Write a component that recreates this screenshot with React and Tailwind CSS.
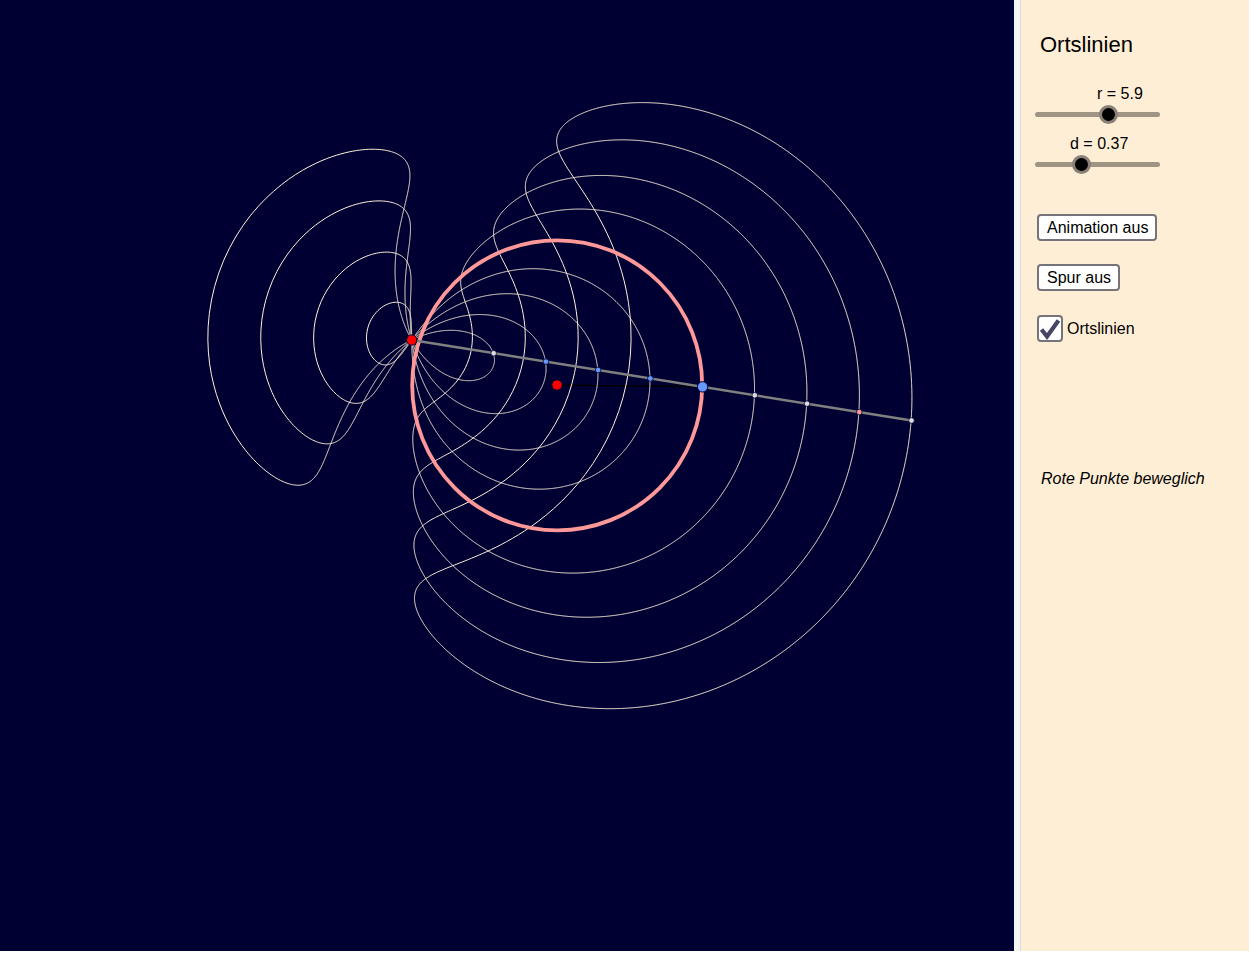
// Ortslinien: conchoids of a circle, sampled at load
const A = { x: 411.7, y: 340 };
const M = { x: 557.2, y: 385.3 };
const R = 145;
const STEP = 52.9;
const P_ANGLE = 0.0085;

function conchoid(k) {
  let d = '';
  for (let i = 0; i <= 1800; i++) {
    const t = (i / 1800) * Math.PI * 2;
    const px = M.x + R * Math.cos(t);
    const py = M.y + R * Math.sin(t);
    const len = Math.hypot(px - A.x, py - A.y);
    const x = px + (k * STEP * (px - A.x)) / len;
    const y = py + (k * STEP * (py - A.y)) / len;
    d += `${i === 0 ? 'M' : 'L'}${x.toFixed(2)} ${y.toFixed(2)}`;
  }
  return d + 'Z';
}

const steps = [-4, -3, -2, -1, 1, 2, 3, 4];
const pointColors = {
  '-4': '#dddddd',
  '-3': '#6699ff',
  '-2': '#6699ff',
  '-1': '#6699ff',
  1: '#dddddd',
  2: '#dddddd',
  3: '#ff9999',
  4: '#dddddd',
};

function Figure() {
  const px = M.x + R * Math.cos(P_ANGLE);
  const py = M.y + R * Math.sin(P_ANGLE);
  const ex = 911.5;
  const ey = 420.5;
  const len = Math.hypot(ex - A.x, ey - A.y);
  const ux = (ex - A.x) / len;
  const uy = (ey - A.y) / len;
  // point on the ray at the circle's right side
  const bx = ex - 4 * STEP * ux;
  const by = ey - 4 * STEP * uy;

  return (
    <svg width="1014" height="951" viewBox="0 0 1014 951" className="block">
      <line x1={M.x} y1={M.y} x2={px} y2={py} stroke="#000000" strokeWidth="1.5" />
      {steps.map((k) => (
        <path key={k} d={conchoid(k)} fill="none" stroke="#fff2da" strokeWidth="1" />
      ))}
      <circle cx={M.x} cy={M.y} r={R} fill="none" stroke="#ff9999" strokeWidth="3.8" />
      <line x1={A.x} y1={A.y} x2={ex} y2={ey} stroke="#808080" strokeWidth="2.4" />
      {steps.map((k) => (
        <circle
          key={k}
          cx={bx + k * STEP * ux}
          cy={by + k * STEP * uy}
          r="2.8"
          fill={pointColors[k]}
          stroke="#000033"
          strokeWidth="0.8"
        />
      ))}
      <circle cx={bx} cy={by} r="5.2" fill="#6699ff" stroke="#000033" strokeWidth="1" />
      <circle cx={A.x} cy={A.y} r="5.2" fill="#ff0000" stroke="#000033" strokeWidth="1" />
      <circle cx={557} cy={385} r="5.2" fill="#ff0000" stroke="#000033" strokeWidth="1" />
    </svg>
  );
}

function Slider({ label, labelClass, thumbClass }) {
  return (
    <div>
      <div className={`text-base leading-[18px] ${labelClass}`}>{label}</div>
      <div className="relative mt-[9px] h-[5px] w-[125px] rounded-full bg-[#a09585]">
        <div className={`absolute top-[-7px] h-[19px] w-[19px] rounded-full border-[3px] border-[#8a8078] bg-black ${thumbClass}`} />
      </div>
    </div>
  );
}

function GgbButton({ children }) {
  return (
    <button className="block h-[27px] rounded-[4px] border-2 border-[#77737a] bg-white pl-[8px] pr-[7px] text-base leading-[22px] text-black">
      {children}
    </button>
  );
}

export default function App() {
  return (
    <div className="flex h-[951px] w-[1249px] font-['Liberation_Sans',Arial,sans-serif] text-black">
      <div className="h-full w-[1014px] bg-[#000033]">
        <Figure />
      </div>
      <div className="h-full w-[7px] border-r border-[#dcdcdc] bg-[#f5f5f5]" />
      <div className="h-full w-[228px] bg-[#ffeed6] pl-[14px] pt-[32px]">
        <h1 className="pl-[5px] text-[22px] leading-[25px]">Ortslinien</h1>

        <div className="mt-[28px]">
          <Slider label="r = 5.9" labelClass="pl-[62px]" thumbClass="left-[64px]" />
        </div>
        <div className="mt-[18px]">
          <Slider label="d = 0.37" labelClass="pl-[35px]" thumbClass="left-[37px]" />
        </div>

        <div className="mt-[47px] pl-[2px]">
          <GgbButton>Animation aus</GgbButton>
          <div className="mt-[23px]">
            <GgbButton>Spur aus</GgbButton>
          </div>
          <div className="mt-[24px] flex items-center gap-[4px]">
            <div className="flex h-[27px] w-[26px] items-center justify-center rounded-[4px] border-2 border-[#77737a] bg-white">
              <svg width="22" height="22" viewBox="0 0 22 22" className="shrink-0">
                <path d="M2.5 11.5 L8 18.5 L19.5 2.5" fill="none" stroke="#444466" strokeWidth="4.2" />
              </svg>
            </div>
            <span className="text-base">Ortslinien</span>
          </div>
        </div>

        <p className="mt-[128px] pl-[6px] text-base italic leading-[18px]">Rote Punkte beweglich</p>
      </div>
    </div>
  );
}
